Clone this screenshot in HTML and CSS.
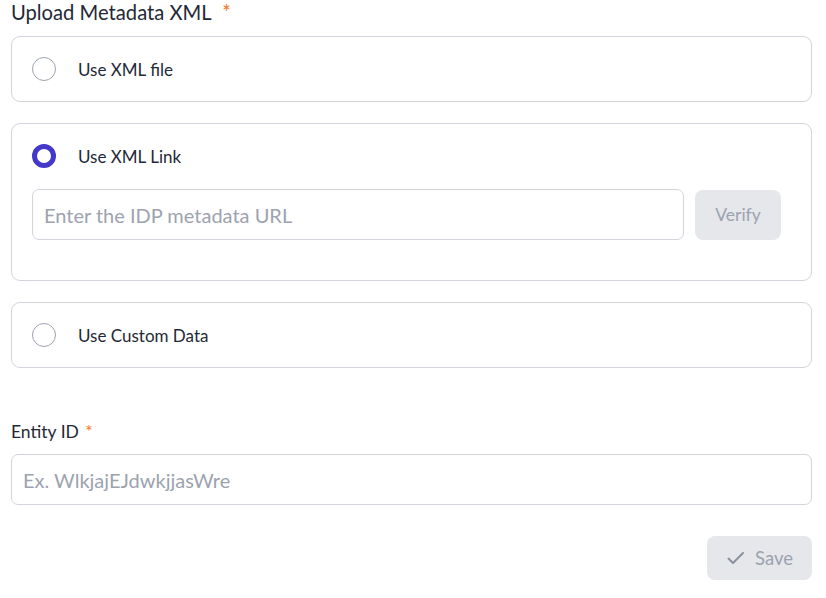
FILE: index.html
```html
<!DOCTYPE html>
<html lang="en">
<head>
    <meta charset="UTF-8">
    <meta name="viewport" content="width=device-width, initial-scale=1.0">
    <title>SAML Metadata</title>
    <link rel="stylesheet" href="styles.css">
</head>
<body>
    <form class="form">
        <div class="field-title">Upload Metadata XML <span class="req">*</span></div>

        <div class="option">
            <label class="option-row">
                <span class="radio"></span>
                <span class="option-label">Use XML file</span>
            </label>
        </div>

        <div class="option">
            <label class="option-row">
                <span class="radio checked"></span>
                <span class="option-label">Use XML Link</span>
            </label>
            <div class="link-row">
                <input class="text-input" type="text" placeholder="Enter the IDP metadata URL">
                <button type="button" class="btn-muted btn-verify">Verify</button>
            </div>
        </div>

        <div class="option">
            <label class="option-row">
                <span class="radio"></span>
                <span class="option-label">Use Custom Data</span>
            </label>
        </div>

        <div class="entity">
            <div class="entity-label">Entity ID <span class="req">*</span></div>
            <input class="text-input" type="text" placeholder="Ex. WlkjajEJdwkjjasWre">
        </div>

        <div class="actions">
            <button type="button" class="btn-muted btn-save">
                <svg width="20" height="20" viewBox="0 0 20 20" fill="none" stroke="currentColor" stroke-width="2" stroke-linecap="round" stroke-linejoin="round"><path d="M2.5 10.5l4.5 4.5 10-10"/></svg>
                Save
            </button>
        </div>
    </form>
</body>
</html>
```

FILE: styles.css
```css
body {
    margin: 0;
    font-family: Lato, "Noto Sans", sans-serif;
    color: #1f2937;
    background-color: #ffffff;
}
.form {
    width: 801px;
    padding: 1px 0 0 11px;
}
.field-title {
    font-size: 20.2px;
    line-height: 22px;
    color: #1f2937;
    margin-bottom: 13px;
}
.req {
    color: #f97316;
    margin-left: 6px;
}
.entity-label .req {
    margin-left: 2px;
}
.option {
    border: 1px solid #d1d5db;
    border-radius: 9px;
    padding: 20px 20px;
    margin-bottom: 21px;
}
.option-row {
    display: flex;
    align-items: center;
    gap: 22px;
    height: 24px;
}
.radio {
    width: 24px;
    height: 24px;
    border: 1px solid #9ca3af;
    border-radius: 50%;
    box-sizing: border-box;
    flex-shrink: 0;
}
.radio.checked {
    border: 5px solid #4338ca;
}
.option-label {
    font-size: 17px;
    color: #1f2937;
}
.link-row {
    display: flex;
    gap: 11px;
    margin: 21px 10px 20px 0;
    align-items: center;
}
.text-input {
    flex: 1;
    height: 51px;
    box-sizing: border-box;
    border: 1px solid #d1d5db;
    border-radius: 7px;
    padding: 0 11px;
    font-family: inherit;
    font-size: 20px;
    color: #1f2937;
    outline: none;
}
.text-input::placeholder {
    color: #9ca3af;
}
.btn-muted {
    background-color: #e5e7eb;
    color: #9ca3af;
    border: none;
    border-radius: 8px;
    font-family: inherit;
    font-size: 17.5px;
}
.btn-verify {
    width: 86px;
    height: 50px;
}
.entity {
    margin-top: 53px;
}
.entity-label {
    font-size: 17.5px;
    line-height: 22px;
    margin-bottom: 11px;
}
.entity .text-input {
    width: 100%;
}
.actions {
    display: flex;
    justify-content: flex-end;
    margin-top: 31px;
}
.btn-save {
    display: flex;
    align-items: center;
    gap: 9px;
    height: 44px;
    padding: 0 19px;
    font-size: 18.5px;
}
.btn-save svg {
    color: #8b919c;
}
```
